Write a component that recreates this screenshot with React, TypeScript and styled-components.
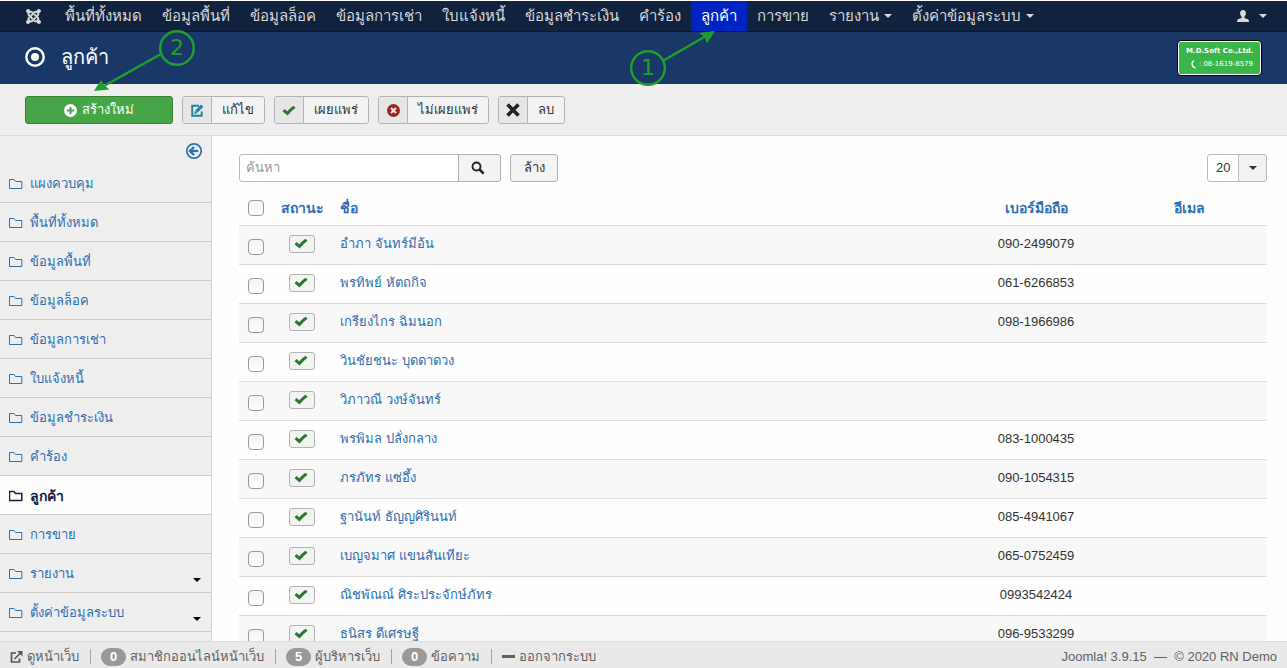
import React from 'react';
import styled, { createGlobalStyle } from 'styled-components';
import { FaJoomla } from 'react-icons/fa';

const GlobalStyle = createGlobalStyle`
  *, *::before, *::after { box-sizing: border-box; }
  html { background: #fefefe; }
  body {
    margin: 0;
    font-family: "Liberation Sans", Arial, sans-serif;
    font-size: 13px;
    line-height: 18px;
    color: #333;
  }
  button, input, select { font: inherit; color: inherit; }
  a { text-decoration: none; color: #2d6fb2; }
`;

const Page = styled.div`
  position: relative;
  display: flex;
  flex-direction: column;
  height: 100vh;
  overflow: hidden;
`;

const NavBar = styled.nav`
  display: flex;
  flex: none;
  align-items: stretch;
  height: 32px;
  padding: 0 10px 0 15px;
  background: #10223e;
  border-top: 1px solid #fff;
  border-bottom: 1px solid #0c192e;
`;

const NavLink = styled.a<{ $active?: boolean }>`
  display: flex;
  align-items: center;
  gap: 5px;
  padding: 0 10px;
  font-size: 15px;
  line-height: 30px;
  white-space: nowrap;
  color: ${(p) => (p.$active ? '#fff' : '#d9d9d9')};
  background: ${(p) => (p.$active ? '#0024c4' : 'transparent')};
`;

const LogoLink = styled(NavLink)`
  margin-right: 3px;
`;

const UserLink = styled(NavLink)`
  gap: 10px;
  margin-left: auto;
`;

const Caret = styled.span<{ $color?: string }>`
  flex: none;
  border: 4px solid transparent;
  border-top-color: ${(p) => p.$color ?? 'currentColor'};
  border-bottom: 0;
`;

const Header = styled.header`
  display: flex;
  flex: none;
  align-items: center;
  gap: 16px;
  height: 52px;
  padding: 0 25px 2px;
  color: #fff;
  background: #1a3867;
`;

const Title = styled.h1`
  margin: 0;
  font-size: 20px;
  line-height: 32px;
  font-weight: normal;
`;

const Brand = styled.div`
  width: 85px;
  height: 36px;
  margin: 2px 0 0 auto;
  padding: 4px 8px;
  border: 1px solid #000;
  border-radius: 4px;
  background: #39b54a;
  box-shadow: inset 0 0 0 1px #fff;
  font-family: "DejaVu Sans", sans-serif;
  font-size: 7px;
  line-height: 13px;
  font-weight: bold;
  text-align: right;
  white-space: nowrap;
`;

const BrandPhone = styled.div`
  display: flex;
  align-items: center;
  justify-content: flex-end;
  gap: 2px;
  font-weight: normal;
`;

const Toolbar = styled.div`
  display: flex;
  flex: none;
  gap: 9px;
  height: 52px;
  padding: 12px 25px;
  background: #eee;
  border-bottom: 1px solid #dcdcdc;
`;

const ToolButton = styled.button`
  display: flex;
  align-items: stretch;
  height: 28px;
  padding: 0;
  overflow: hidden;
  border: 1px solid #b3b3b3;
  border-radius: 3px;
  background: #f3f3f3;
  white-space: nowrap;
`;

const ToolIcon = styled.span`
  display: flex;
  align-items: center;
  justify-content: center;
  width: 29px;
  background: #e6e6e6;
  border-right: 1px solid #b3b3b3;
`;

const ToolLabel = styled.span`
  padding: 0 10px;
  line-height: 26px;
`;

const NewButton = styled(ToolButton)`
  align-items: center;
  justify-content: center;
  gap: 5px;
  width: 148px;
  color: #fff;
  background: #46a546;
  border-color: #378137;
`;

const Body = styled.div`
  display: flex;
  flex: 1;
  min-height: 0;
  overflow: hidden;
`;

const Sidebar = styled.aside`
  flex: none;
  width: 212px;
  background: #eee;
  border-right: 1px solid #d3d3d3;
`;

const CollapseRow = styled.div`
  display: flex;
  justify-content: flex-end;
  height: 28px;
  padding: 6px 8px;
`;

const CollapseButton = styled.button`
  display: flex;
  width: 18px;
  height: 18px;
  padding: 0;
  border: 0;
  background: none;
  color: #2d6fb2;
`;

const SideLink = styled.a<{ $active?: boolean }>`
  display: flex;
  align-items: center;
  gap: 7px;
  height: 39px;
  padding: 1px 10px 0 9px;
  border-bottom: 1px solid #ccc;
  background: ${(p) => (p.$active ? '#fefefe' : 'transparent')};
  color: ${(p) => (p.$active ? '#10223e' : '#2d6fb2')};
  font-size: ${(p) => (p.$active ? '14px' : '13px')};
  font-weight: ${(p) => (p.$active ? 'bold' : 'normal')};

  ${Caret} {
    align-self: flex-end;
    margin: 0 0 10px auto;
  }
`;

const Main = styled.main`
  flex: 1;
  min-width: 0;
  padding: 18px 20px 0 27px;
`;

const FilterBar = styled.form`
  display: flex;
  height: 28px;
`;

const SearchInput = styled.input`
  width: 220px;
  padding: 0 6px;
  border: 1px solid #bbb;
  border-radius: 3px 0 0 3px;
  background: #fff;
  &::placeholder { color: #999; opacity: 1; }
`;

const FilterButton = styled.button`
  display: flex;
  align-items: center;
  justify-content: center;
  width: 48px;
  margin-left: 9px;
  padding: 0;
  border: 1px solid #b3b3b3;
  border-radius: 3px;
  background: #f3f3f3;
`;

const SearchButton = styled(FilterButton)`
  width: 43px;
  margin-left: -1px;
  padding-right: 4px;
  border-radius: 0 3px 3px 0;
`;

const LimitBox = styled.div`
  display: grid;
  grid-template-columns: 31px 27px;
  align-items: center;
  justify-items: center;
  width: 60px;
  margin-left: auto;
  border: 1px solid #bbb;
  border-radius: 3px;
  background: linear-gradient(to right, #fff 30px, #bbb 30px, #bbb 31px, #f3f3f3 31px);

  ${Caret} { grid-area: 1 / 2; pointer-events: none; }
`;

const LimitSelect = styled.select`
  grid-area: 1 / 1 / 2 / 3;
  width: 100%;
  height: 26px;
  padding: 0 8px;
  border: 0;
  background: transparent;
  appearance: none;
`;

const Table = styled.table`
  width: 100%;
  margin-top: 10px;
  border-collapse: collapse;
  table-layout: fixed;
`;

const HeadCell = styled.th<{ $w?: number; $left?: boolean }>`
  width: ${(p) => (p.$w ? `${p.$w}px` : 'auto')};
  height: 33px;
  padding: 0 ${(p) => (p.$left ? '9px' : '0')};
  font-size: 14px;
  text-align: ${(p) => (p.$left ? 'left' : 'center')};
  white-space: nowrap;
`;

const Row = styled.tr`
  border-top: 1px solid #ddd;
  &:nth-child(odd) { background: #f8f8f8; }
`;

const Cell = styled.td<{ $left?: boolean }>`
  height: 39px;
  padding: 9px 9px 0;
  vertical-align: top;
  text-align: ${(p) => (p.$left ? 'left' : 'center')};
  white-space: nowrap;
`;

const Check = styled.input`
  display: block;
  appearance: none;
  width: 16px;
  height: 16px;
  margin: 0 auto;
  border: 1px solid #999;
  border-radius: 4px;
  background: linear-gradient(#f2f2f2, #fff);

  ${Cell} & { margin-top: 4px; }
`;

const StatusButton = styled.button`
  display: flex;
  align-items: center;
  justify-content: center;
  width: 26px;
  height: 18px;
  margin: 0 auto;
  padding: 0 2px 0 0;
  border: 1px solid #b3b3b3;
  border-radius: 3px;
  background: #f3f3f3;
`;

const Footer = styled.footer`
  display: flex;
  flex: none;
  align-items: center;
  height: 27px;
  padding: 3px 10px 0;
  border-top: 1px solid #dcdcdc;
  background: #e9e9e9;
  color: #626262;
  white-space: nowrap;
`;

const FootItem = styled.a`
  display: flex;
  align-items: center;
  gap: 4px;
  color: #626262;
`;

const Divider = styled.span`
  width: 1px;
  height: 15px;
  margin: 0 10px 0 11px;
  background: #a5a5a5;
`;

const Badge = styled.span`
  min-width: 25px;
  height: 18px;
  padding: 0 8px;
  border-radius: 9px;
  background: #999;
  color: #fff;
  font-weight: bold;
  text-align: center;
`;

const Copyright = styled.span`
  margin-left: auto;
  white-space: pre;
`;

const Callouts = styled.svg`
  position: absolute;
  left: 0;
  top: 0;
  pointer-events: none;
`;

const UserIcon = () => (
  <svg width="12" height="12" viewBox="0 0 12 12" fill="#d9d9d9">
    <path d="M6 0C8 0 9 1.300 8.900 3.300 8.800 5 8.200 6 7.400 6.700V8L11 9.200Q12 9.600 12 12H0Q0 9.600 1 9.200L4.600 8V6.700C3.800 6 3.200 5 3.100 3.300 3 1.300 4 0 6 0Z" />
  </svg>
);

const TargetIcon = () => (
  <svg width="20" height="20" viewBox="0 0 20 20">
    <circle cx="10" cy="10" r="8.700" fill="none" stroke="#fff" strokeWidth="2.400" />
    <circle cx="10" cy="10" r="4" fill="#fff" />
  </svg>
);

const PlusIcon = () => (
  <svg width="13" height="13" viewBox="0 0 13 13">
    <circle cx="6.5" cy="6.5" r="6.500" fill="#fff" />
    <path d="M6.500 3V10M3 6.500H10" stroke="#46a546" strokeWidth="2" />
  </svg>
);

const EditIcon = () => (
  <svg width="13" height="13" viewBox="0 0 13 13" fill="none" stroke="#2384a4">
    <path d="M8 1.800H1.200V11.800H10.700V7.500" strokeWidth="1.900" />
    <path d="M5.300 7.700 11.200 1.700" strokeWidth="3.200" />
    <path d="M3.200 10 3.900 6.800 6.400 9.200Z" fill="#2384a4" stroke="none" />
  </svg>
);

const TickIcon = () => (
  <svg width="14" height="13" viewBox="0 0 14 13" fill="#2d7a2d">
    <path d="M0.500 7.200 2.600 5 5.200 7.300Q8 4 11.500 1.700L13.600 3.800Q9 7.200 5.500 11.600Z" />
  </svg>
);

const UnpublishIcon = () => (
  <svg width="13" height="13" viewBox="0 0 13 13">
    <circle cx="6.5" cy="6.5" r="6.500" fill="#9d261d" />
    <path d="M4 4 9 9M9 4 4 9" stroke="#e6e6e6" strokeWidth="2" />
  </svg>
);

const CrossIcon = () => (
  <svg width="14" height="14" viewBox="0 0 14 14" stroke="#222" strokeWidth="3.600">
    <path d="M1.500 1.500 12.500 12.500M12.500 1.500 1.500 12.500" />
  </svg>
);

const BackIcon = () => (
  <svg width="18" height="18" viewBox="0 0 18 18" fill="none" stroke="currentColor">
    <circle cx="9" cy="9" r="7.200" strokeWidth="1.700" />
    <path d="M5.200 9H13.300" strokeWidth="2.200" />
    <path d="M9 5 5 9 9 13" strokeWidth="2.400" />
  </svg>
);

const FolderIcon = ({ bold }: { bold?: boolean }) => (
  <svg width="14" height="12" viewBox="0 0 14 12" fill="none" stroke="currentColor" strokeWidth={bold ? 1.5 : 1}>
    <path d="M0.500 10.500V1.500H5L6.500 3.500H12.800V10.500Z" />
  </svg>
);

const SearchIcon = () => (
  <svg width="14" height="14" viewBox="0 0 14 14" fill="none" stroke="#222">
    <circle cx="5.500" cy="5.500" r="4" strokeWidth="1.900" />
    <path d="M8.500 8.500 12.700 12.700" strokeWidth="2.500" />
  </svg>
);

const ExternalIcon = () => (
  <svg width="13" height="12" viewBox="0 0 13 12" fill="none" stroke="#555" strokeWidth="1.700">
    <path d="M6 2H1.500V11H9.500V7.500M4.500 8 10.500 2" />
    <path d="M7 0H12.500V5.500Z" fill="#555" stroke="none" />
  </svg>
);

const MinusIcon = () => (
  <svg width="13" height="12" viewBox="0 0 13 12"><rect y="4" width="13" height="3" fill="#626262" /></svg>
);

const PhoneIcon = () => (
  <svg width="6" height="9" viewBox="0 0 6 9" fill="none" stroke="#fff" strokeWidth="1.400">
    <path d="M3 0.700C0 2 0.500 7 4.500 8" />
  </svg>
);

const menu = [
  { label: 'พื้นที่ทั้งหมด' },
  { label: 'ข้อมูลพื้นที่' },
  { label: 'ข้อมูลล็อค' },
  { label: 'ข้อมูลการเช่า' },
  { label: 'ใบแจ้งหนี้' },
  { label: 'ข้อมูลชำระเงิน' },
  { label: 'คำร้อง' },
  { label: 'ลูกค้า', active: true },
  { label: 'การขาย' },
  { label: 'รายงาน', sub: true },
  { label: 'ตั้งค่าข้อมูลระบบ', sub: true },
];

const customers = [
  ['อำภา จันทร์มีอ้น', '090-2499079'],
  ['พรทิพย์ หัตถกิจ', '061-6266853'],
  ['เกรียงไกร ฉิมนอก', '098-1966986'],
  ['วินชัยชนะ บุดดาดวง', ''],
  ['วิภาวณี วงษ์จันทร์', ''],
  ['พรพิมล ปลั่งกลาง', '083-1000435'],
  ['ภรภัทร แซ่อึ้ง', '090-1054315'],
  ['ฐานันท์ ธัญญศิรินนท์', '085-4941067'],
  ['เบญจมาศ แขนสันเทียะ', '065-0752459'],
  ['ณิชพัณณ์ ศิระประจักษ์ภัทร', '0993542424'],
  ['ธนิสร ดีเศรษฐี', '096-9533299'],
];

export default function App() {
  return (
    <Page>
      <GlobalStyle />
      <NavBar>
        <LogoLink href="#" aria-label="Joomla"><FaJoomla size={17} /></LogoLink>
        {menu.map((m) => (
          <NavLink key={m.label} href="#" $active={m.active}>
            {m.label}
            {m.sub && <Caret />}
          </NavLink>
        ))}
        <UserLink href="#" aria-label="User"><UserIcon /><Caret /></UserLink>
      </NavBar>

      <Header>
        <TargetIcon />
        <Title>ลูกค้า</Title>
        <Brand>
          M.D.Soft Co.,Ltd.
          <BrandPhone><PhoneIcon />: 08-1619-8579</BrandPhone>
        </Brand>
      </Header>

      <Toolbar>
        <NewButton type="button"><PlusIcon />สร้างใหม่</NewButton>
        <ToolButton type="button"><ToolIcon><EditIcon /></ToolIcon><ToolLabel>แก้ไข</ToolLabel></ToolButton>
        <ToolButton type="button"><ToolIcon><TickIcon /></ToolIcon><ToolLabel>เผยแพร่</ToolLabel></ToolButton>
        <ToolButton type="button"><ToolIcon><UnpublishIcon /></ToolIcon><ToolLabel>ไม่เผยแพร่</ToolLabel></ToolButton>
        <ToolButton type="button"><ToolIcon><CrossIcon /></ToolIcon><ToolLabel>ลบ</ToolLabel></ToolButton>
      </Toolbar>

      <Body>
        <Sidebar>
          <CollapseRow>
            <CollapseButton type="button" aria-label="Toggle sidebar"><BackIcon /></CollapseButton>
          </CollapseRow>
          {[{ label: 'แผงควบคุม' } as (typeof menu)[number], ...menu].map((m) => (
            <SideLink key={m.label} href="#" $active={m.active}>
              <FolderIcon bold={m.active} />
              {m.label}
              {m.sub && <Caret $color="#000" />}
            </SideLink>
          ))}
        </Sidebar>

        <Main>
          <FilterBar>
            <SearchInput type="text" placeholder="ค้นหา" aria-label="ค้นหา" />
            <SearchButton type="button" aria-label="Search"><SearchIcon /></SearchButton>
            <FilterButton type="button">ล้าง</FilterButton>
            <LimitBox>
              <LimitSelect aria-label="Limit" defaultValue="20"><option>20</option></LimitSelect>
              <Caret />
            </LimitBox>
          </FilterBar>

          <Table>
            <thead>
              <tr>
                <HeadCell $w={34}><Check type="checkbox" aria-label="Select all" /></HeadCell>
                <HeadCell $w={58}><a href="#">สถานะ</a></HeadCell>
                <HeadCell $left><a href="#">ชื่อ</a></HeadCell>
                <HeadCell $w={150}><a href="#">เบอร์มือถือ</a></HeadCell>
                <HeadCell $w={156}><a href="#">อีเมล</a></HeadCell>
              </tr>
            </thead>
            <tbody>
              {customers.map(([name, phone]) => (
                <Row key={name}>
                  <Cell><Check type="checkbox" aria-label={name} /></Cell>
                  <Cell><StatusButton type="button" aria-label="Published"><TickIcon /></StatusButton></Cell>
                  <Cell $left><a href="#">{name}</a></Cell>
                  <Cell>{phone}</Cell>
                  <Cell />
                </Row>
              ))}
            </tbody>
          </Table>
        </Main>
      </Body>

      <Footer>
        <FootItem href="#"><ExternalIcon />ดูหน้าเว็บ</FootItem>
        <Divider />
        <FootItem href="#"><Badge>0</Badge>สมาชิกออนไลน์หน้าเว็บ</FootItem>
        <Divider />
        <FootItem href="#"><Badge>5</Badge>ผู้บริหารเว็บ</FootItem>
        <Divider />
        <FootItem href="#"><Badge>0</Badge>ข้อความ</FootItem>
        <Divider />
        <FootItem href="#"><MinusIcon />ออกจากระบบ</FootItem>
        <Copyright>{'Joomla! 3.9.15  —  © 2020 RN Demo'}</Copyright>
      </Footer>

      <Callouts width="760" height="110" viewBox="0 0 760 110" fill="none" stroke="#1f9e2f" strokeWidth="2.500" aria-hidden="true">
        <circle cx="177" cy="48" r="16.800" />
        <path d="M161 54 104 86" />
        <path d="M94 91 101 80 104.500 85.500 109.500 89.500Z" fill="#1f9e2f" stroke="none" />
        <circle cx="648" cy="68" r="16.800" />
        <path d="M663.500 60.500 706 36" />
        <path d="M715 31 707 43.500 704.500 37 699 33Z" fill="#1f9e2f" stroke="none" />
        <g fill="#1f9e2f" stroke="none" fontFamily="DejaVu Sans, sans-serif" fontSize="22" textAnchor="middle">
          <text x="177" y="55">2</text>
          <text x="648" y="75">1</text>
        </g>
      </Callouts>
    </Page>
  );
}
